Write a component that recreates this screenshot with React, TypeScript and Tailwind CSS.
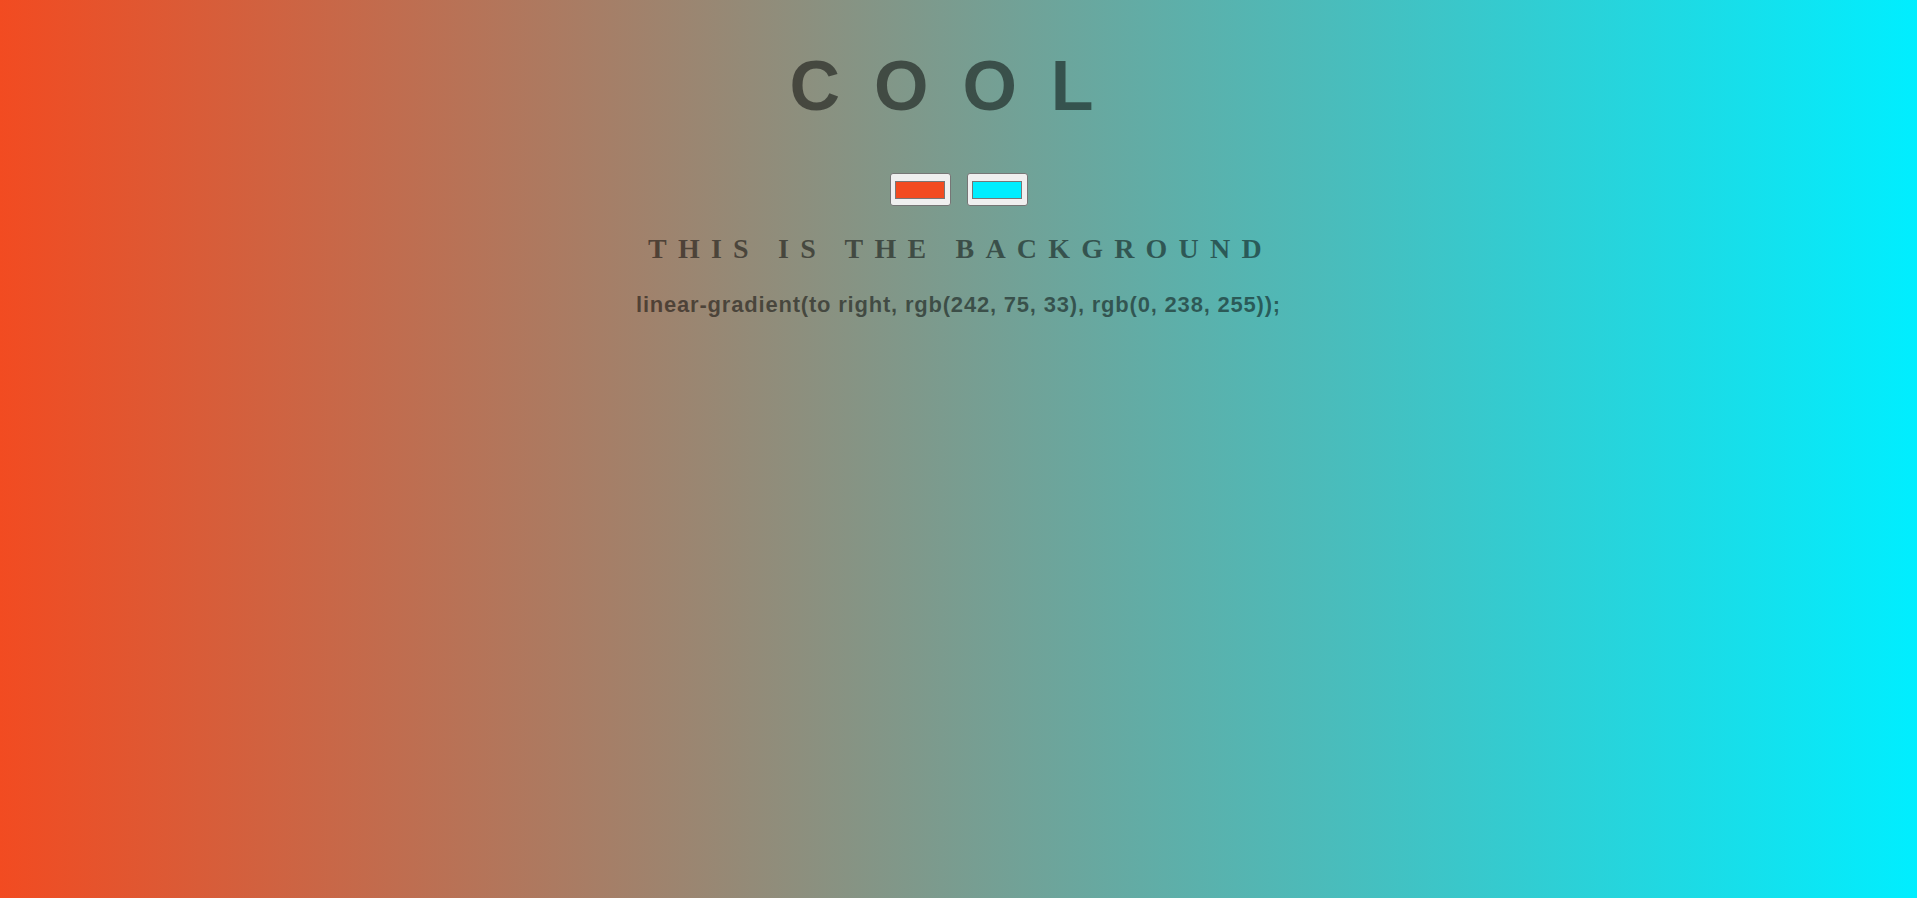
import { useState } from 'react';

const Swatch = ({ color }: { color: string }) => (
  <div className="w-[61px] h-[33px] flex items-center justify-center bg-[#efefef] border border-[#767676] rounded-[3px]">
    <div className="w-[50px] h-[18px] border border-[#777777]" style={{ backgroundColor: color }} />
  </div>
);

const App = () => {
  const [left] = useState('rgb(242, 75, 33)');
  const [right] = useState('rgb(0, 238, 255)');

  return (
    <div className="min-h-screen w-full bg-[linear-gradient(to_right,#f24b21,#00eeff)] text-center text-black/50">
      <div className="flex flex-col items-center pt-[51px]">
        <h1 className="font-['Liberation_Sans',Arial,sans-serif] font-bold text-[70px] leading-[70px] tracking-[34px]">
          COOL
        </h1>

        <div className="flex gap-4 mt-[52px]">
          <Swatch color={left} />
          <Swatch color={right} />
        </div>

        <h3 className="mt-[29px] pl-[4px] font-['Liberation_Serif','Times_New_Roman',serif] font-bold text-[28px] leading-[28px] tracking-[11.2px] uppercase">
          This is the background
        </h3>

        <p className="mt-[31px] font-['Liberation_Sans',Arial,sans-serif] font-bold text-[22px] leading-[22px] tracking-[0.8px]">
          linear-gradient(to right, {left}, {right});
        </p>
      </div>
    </div>
  );
};

export default App;
